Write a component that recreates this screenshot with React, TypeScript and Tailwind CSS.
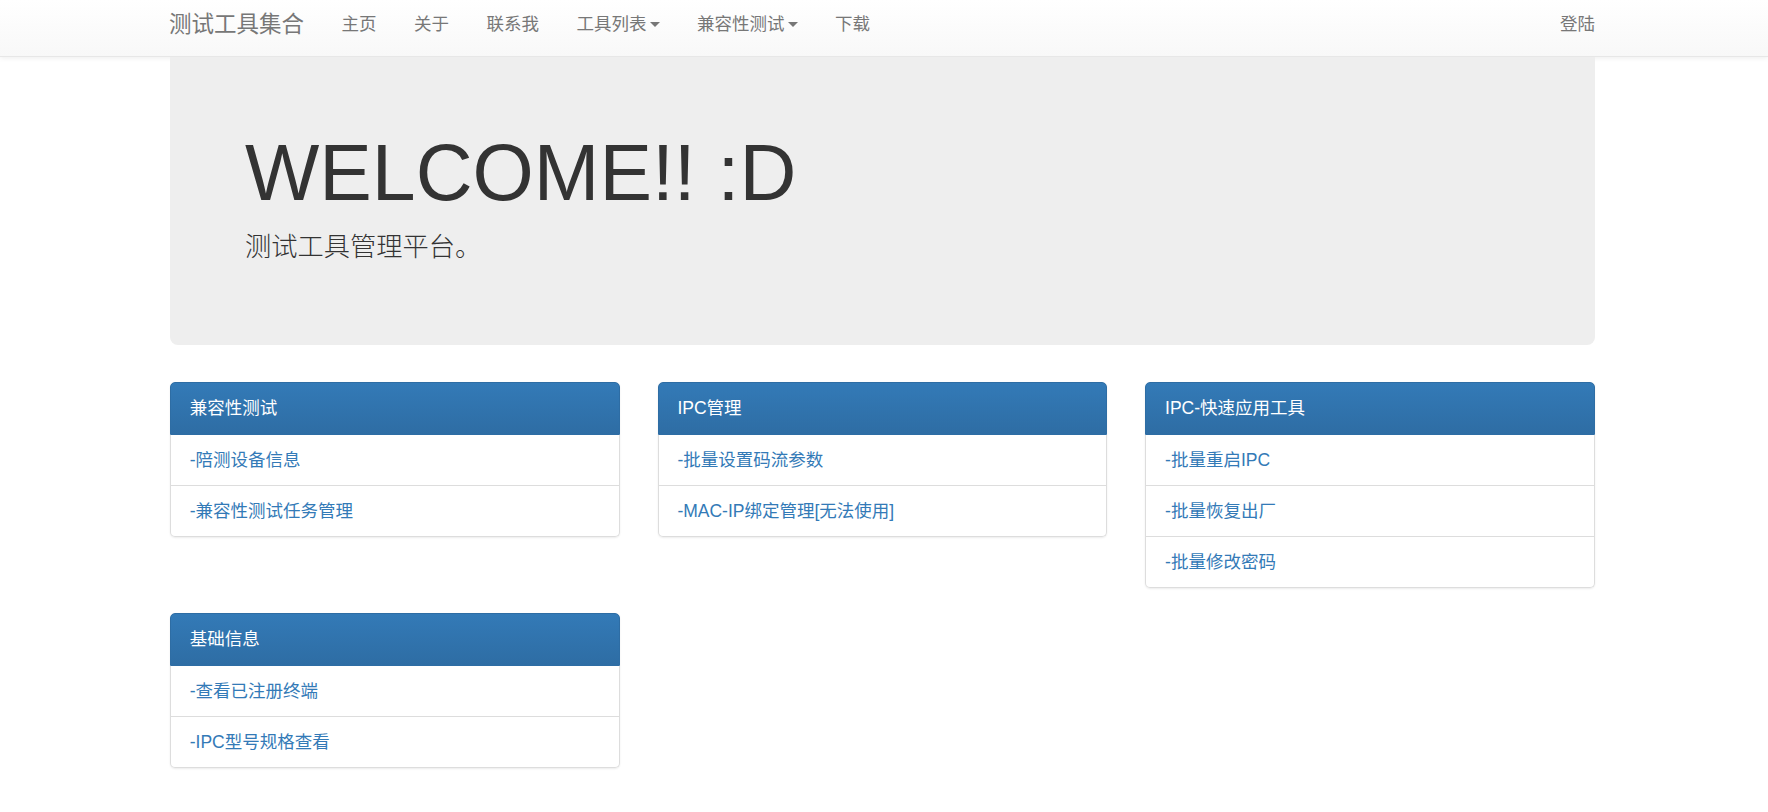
const FONT = "font-['Liberation_Sans','Noto_Sans_CJK_SC',sans-serif]";

type Panel = { title: string; items: string[] };

const panels: Panel[] = [
  { title: "兼容性测试", items: ["-陪测设备信息", "-兼容性测试任务管理"] },
  { title: "IPC管理", items: ["-批量设置码流参数", "-MAC-IP绑定管理[无法使用]"] },
  { title: "IPC-快速应用工具", items: ["-批量重启IPC", "-批量恢复出厂", "-批量修改密码"] },
  { title: "基础信息", items: ["-查看已注册终端", "-IPC型号规格查看"] }
];

const navLinks: { label: string; caret?: boolean }[] = [
  { label: "主页" },
  { label: "关于" },
  { label: "联系我" },
  { label: "工具列表", caret: true },
  { label: "兼容性测试", caret: true },
  { label: "下载" }
];

function Caret() {
  return (
    <span className="ml-[3px] inline-block h-0 w-0 border-x-[5px] border-t-[5px] border-x-transparent border-t-[#777] align-middle" />
  );
}

function Navbar() {
  return (
    <nav className="h-[57px] border-b border-[#e7e7e7] bg-gradient-to-b from-white to-[#f8f8f8] shadow-[0_1px_5px_rgba(0,0,0,0.075)]">
      <div className="ml-[169px] flex h-full w-[1426px] items-center pb-[7px] text-[17.5px] leading-[25px] text-[#777]">
        <a className="pr-[18.75px] text-[22.5px]">测试工具集合</a>
        <ul className="flex">
          {navLinks.map((link) => (
            <li key={link.label}>
              <a className="flex items-center px-[18.75px]">
                {link.label}
                {link.caret && <Caret />}
              </a>
            </li>
          ))}
        </ul>
        <a className="ml-auto">登陆</a>
      </div>
    </nav>
  );
}

function Jumbotron() {
  return (
    <div className="rounded-b-[8px] bg-[#eee] px-[75px] pb-[60px] pt-[73px] text-[#333]">
      <h1 className="mb-[12.5px] text-[78.75px] leading-[1.1]">WELCOME!! :D</h1>
      <p className="mb-[18.75px] text-[26.25px] font-extralight leading-[37.5px]">测试工具管理平台。</p>
    </div>
  );
}

function PanelCard({ panel }: { panel: Panel }) {
  return (
    <div className="rounded-[5px] shadow-[0_1px_2px_rgba(0,0,0,0.08)]">
      <div className="rounded-t-[5px] border border-[#2e6da4] bg-gradient-to-b from-[#337ab7] to-[#2e6da4] px-[18.75px] py-[13px] text-[17.5px] leading-[25px] text-white">
        {panel.title}
      </div>
      <div className="rounded-b-[5px] border-x border-b border-[#ddd] bg-white">
        {panel.items.map((item, i) => (
          <a
            key={item}
            className={
              "block px-[18.75px] py-[12.5px] text-[17.5px] leading-[25px] text-[#337ab7] " +
              (i > 0 ? "border-t border-[#ddd]" : "")
            }
          >
            {item}
          </a>
        ))}
      </div>
    </div>
  );
}

export default function App() {
  return (
    <div className={"min-h-screen bg-white " + FONT}>
      <Navbar />
      <div className="ml-[170px] w-[1425px]">
        <Jumbotron />
        <div className="mt-[37px] grid grid-cols-3 items-start gap-x-[38px] gap-y-[25px]">
          {panels.map((p) => (
            <PanelCard key={p.title} panel={p} />
          ))}
        </div>
      </div>
    </div>
  );
}
